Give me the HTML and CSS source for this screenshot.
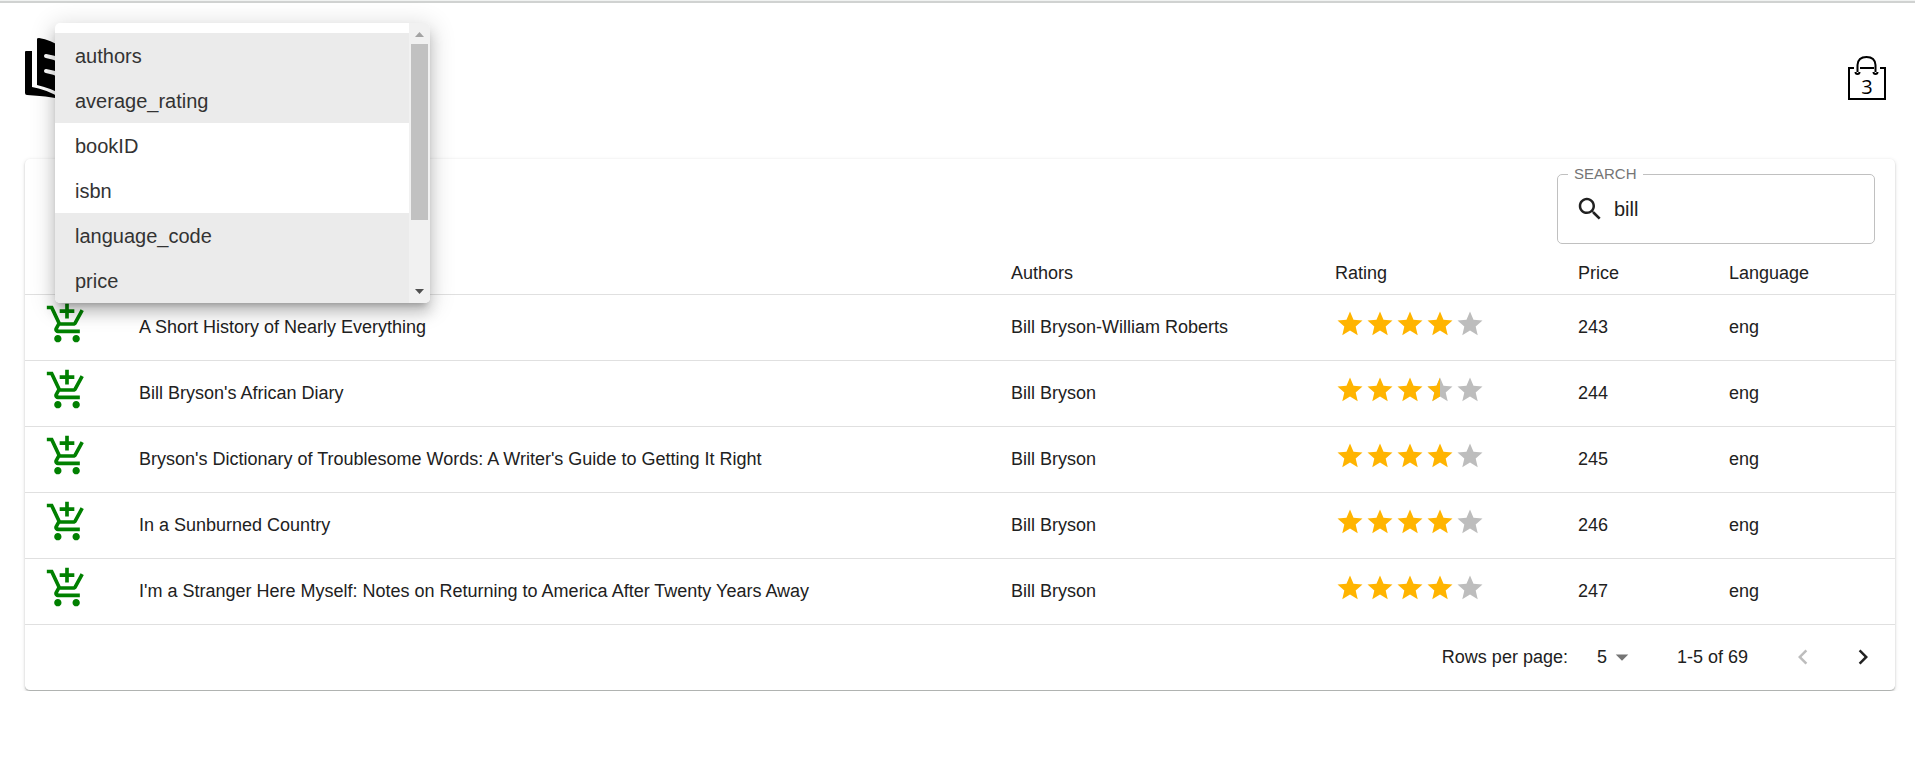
FILE: index.html
```html
<!DOCTYPE html>
<html lang="en">
<head>
<meta charset="utf-8">
<title>Book store</title>
<link rel="stylesheet" href="styles.css">
</head>
<body>
<svg class="sprite" aria-hidden="true">
  <symbol id="cart" viewBox="0 0 24 24"><path d="M11 9h2V6h3V4h-3V1h-2v3H8v2h3v3zm-4 9c-1.100 0-1.990.9-1.990 2S5.900 22 7 22s2-.9 2-2-.9-2-2-2zm10 0c-1.100 0-1.990.9-1.990 2s.890 2 1.990 2 2-.9 2-2-.9-2-2-2zm-9.830-3.250l.03-.12.9-1.630h7.450c.750 0 1.410-.410 1.750-1.030l3.860-7.010L19.420 4h-.01l-1.100 2-2.760 5H8.530l-.13-.27L6.160 6l-.95-2-.94-2H1v2h2l3.600 7.590-1.350 2.450c-.160.280-.250.610-.250.960 0 1.100.9 2 2 2h12v-2H7.420c-.130 0-.250-.110-.250-.250z"/></symbol>
  <symbol id="star" viewBox="0 0 24 24"><path d="M12 17.270L18.180 21l-1.640-7.030L22 9.240l-7.190-.61L12 2 9.190 8.630 2 9.240l5.460 4.730L5.820 21z"/></symbol>
  <symbol id="half" viewBox="0 0 24 24"><path d="M12 2L9.190 8.630 2 9.240l5.460 4.730L5.820 21 12 17.270z"/></symbol>
</svg>

<header class="topbar">
  <a class="logo" href="#" aria-label="Home">
    <svg viewBox="0 0 60 62"><path d="M0 14q0-1 1-1h6v36q13 2 29 11v1Q22 58 2 57q-2 0-2-2z"/><path d="M12 1q0-1 2-1 12 2 22 9v47Q25 50 12 47z"/><path class="logo-cut" d="M21 18q8 1 15 5M21 33q8 1 15 5"/></svg>
  </a>
  <button class="bag" type="button" aria-label="Shopping bag, 3 items">
    <svg viewBox="0 0 38 45"><path d="M6 12H1v31h36V12h-5M12 12h14M9.500 16V9Q10 1 18.500 1T27.500 9v7"/><path d="M7.500 16a2 2 0 0 0 4 0M25.500 16a2 2 0 0 0 4 0"/></svg>
    <span class="bag-count">3</span>
  </button>
</header>

<main class="card">
  <div class="toolbar">
    <fieldset class="search">
      <legend><label for="search">SEARCH</label></legend>
      <svg class="search-icon" viewBox="0 0 24 24"><path d="M15.500 14h-.79l-.28-.27C15.410 12.590 16 11.110 16 9.500 16 5.910 13.090 3 9.500 3S3 5.910 3 9.500 5.910 16 9.500 16c1.610 0 3.090-.59 4.230-1.570l.27.28v.79l5 4.990L20.490 19l-4.990-5zm-6 0C7.010 14 5 11.990 5 9.500S7.010 5 9.500 5 14 7.010 14 9.500 11.990 14 9.500 14z"/></svg>
      <input id="search" type="text" value="bill">
    </fieldset>
  </div>

  <table class="books">
    <colgroup><col class="c-add"><col class="c-title"><col class="c-authors"><col class="c-rating"><col class="c-price"><col class="c-lang"></colgroup>
    <thead>
      <tr><th></th><th></th><th>Authors</th><th>Rating</th><th>Price</th><th>Language</th></tr>
    </thead>
    <tbody>
      <tr>
        <td><button class="add" type="button" aria-label="Add to cart"><svg><use href="#cart"/></svg></button></td>
        <td>A Short History of Nearly Everything</td><td>Bill Bryson-William Roberts</td>
        <td><div class="stars"><svg><use href="#star"/></svg><svg><use href="#star"/></svg><svg><use href="#star"/></svg><svg><use href="#star"/></svg><svg class="off"><use href="#star"/></svg></div></td>
        <td>243</td><td>eng</td>
      </tr>
      <tr>
        <td><button class="add" type="button" aria-label="Add to cart"><svg><use href="#cart"/></svg></button></td>
        <td>Bill Bryson's African Diary</td><td>Bill Bryson</td>
        <td><div class="stars"><svg><use href="#star"/></svg><svg><use href="#star"/></svg><svg><use href="#star"/></svg><svg><use class="off" href="#star"/><use href="#half"/></svg><svg class="off"><use href="#star"/></svg></div></td>
        <td>244</td><td>eng</td>
      </tr>
      <tr>
        <td><button class="add" type="button" aria-label="Add to cart"><svg><use href="#cart"/></svg></button></td>
        <td>Bryson's Dictionary of Troublesome Words: A Writer's Guide to Getting It Right</td><td>Bill Bryson</td>
        <td><div class="stars"><svg><use href="#star"/></svg><svg><use href="#star"/></svg><svg><use href="#star"/></svg><svg><use href="#star"/></svg><svg class="off"><use href="#star"/></svg></div></td>
        <td>245</td><td>eng</td>
      </tr>
      <tr>
        <td><button class="add" type="button" aria-label="Add to cart"><svg><use href="#cart"/></svg></button></td>
        <td>In a Sunburned Country</td><td>Bill Bryson</td>
        <td><div class="stars"><svg><use href="#star"/></svg><svg><use href="#star"/></svg><svg><use href="#star"/></svg><svg><use href="#star"/></svg><svg class="off"><use href="#star"/></svg></div></td>
        <td>246</td><td>eng</td>
      </tr>
      <tr>
        <td><button class="add" type="button" aria-label="Add to cart"><svg><use href="#cart"/></svg></button></td>
        <td>I'm a Stranger Here Myself: Notes on Returning to America After Twenty Years Away</td><td>Bill Bryson</td>
        <td><div class="stars"><svg><use href="#star"/></svg><svg><use href="#star"/></svg><svg><use href="#star"/></svg><svg><use href="#star"/></svg><svg class="off"><use href="#star"/></svg></div></td>
        <td>247</td><td>eng</td>
      </tr>
    </tbody>
  </table>

  <footer class="pager">
    <label for="rows">Rows per page:</label>
    <span class="rows">
      <select id="rows"><option>5</option><option>10</option><option>25</option></select>
      <svg viewBox="0 0 24 24"><path d="M7 10l5 5 5-5z"/></svg>
    </span>
    <span class="range">1-5 of 69</span>
    <button class="page" type="button" aria-label="Previous page" disabled><svg viewBox="0 0 24 24"><path d="M15.410 16.590L10.830 12l4.580-4.590L14 6l-6 6 6 6z"/></svg></button>
    <button class="page" type="button" aria-label="Next page"><svg viewBox="0 0 24 24"><path d="M8.590 16.590L13.170 12 8.590 7.410 10 6l6 6-6 6z"/></svg></button>
  </footer>
</main>

<div class="menu">
  <div class="menu-list" role="listbox" aria-label="Columns" aria-multiselectable="true">
    <button type="button" role="option" aria-selected="true">authors</button>
    <button type="button" role="option" aria-selected="true">average_rating</button>
    <button type="button" role="option" aria-selected="false">bookID</button>
    <button type="button" role="option" aria-selected="false">isbn</button>
    <button type="button" role="option" aria-selected="true">language_code</button>
    <button type="button" role="option" aria-selected="true">price</button>
  </div>
  <div class="scrollbar" aria-hidden="true">
    <svg class="arrow up" viewBox="0 0 9 5"><path d="M0 5L4.500 0 9 5z"/></svg>
    <div class="track"><div class="thumb"></div></div>
    <svg class="arrow" viewBox="0 0 9 5"><path d="M0 0L4.500 5 9 0z"/></svg>
  </div>
</div>
</body>
</html>
```
FILE: styles.css
```css
* { box-sizing: border-box; }

body {
  margin: 0;
  border-top: 1px solid #f0f2f1;
  background: #fff;
  color: #212121;
  font-family: "Liberation Sans", Arial, sans-serif;
  font-size: 18px;
  line-height: 24px;
}

button, input, select { font: inherit; color: inherit; }
button { padding: 0; border: 0; background: none; cursor: pointer; }
svg { display: block; }
.sprite { position: absolute; width: 0; height: 0; }

.topbar {
  display: flex;
  justify-content: space-between;
  align-items: flex-start;
  height: 158px;
  padding: 35px 29px 0 25px;
  border-top: 2px solid #d0d2d1;
}
.logo svg { width: 60px; height: 62px; fill: #000; }
.logo-cut { fill: none; stroke: #fff; stroke-width: 4; stroke-linecap: round; }
.bag { display: grid; margin-top: 18px; color: #000; }
.bag > * { grid-area: 1 / 1; }
.bag svg { width: 38px; height: 45px; fill: none; stroke: #000; stroke-width: 2; }
.bag-count { padding-top: 19px; font-family: "Open Sans", sans-serif; font-size: 20px; }

.card {
  margin: 0 20px 0 25px;
  border-bottom: 1px solid #b0b3b1;
  border-radius: 5px;
  background: #fff;
  box-shadow: 0 1px 2px 0 rgba(0,0,0,.16), 0 1px 4px 0 rgba(0,0,0,.12);
}

.toolbar { display: flex; justify-content: flex-end; height: 92px; padding: 6px 20px 0; }
.search {
  display: flex;
  align-items: center;
  width: 318px;
  height: 79px;
  margin: 0;
  padding: 0 17px 9px;
  border: 1px solid #c0c0c0;
  border-radius: 5px;
}
.search legend { margin-left: -7px; padding: 0 6px; color: #757575; font-size: 15px; line-height: 18px; }
.search-icon { width: 30px; height: 30px; flex: none; fill: #212121; }
.search input { width: 100%; min-width: 0; margin-left: 9px; padding: 0; border: 0; outline: 0; background: none; font-size: 20px; }

.books { width: 100%; table-layout: fixed; border-collapse: collapse; }
.c-add { width: 94px; }
.c-authors { width: 324px; }
.c-rating { width: 243px; }
.c-price { width: 151px; }
.c-lang { width: 186px; }
.books th, .books td { padding: 0 20px; border-bottom: 1px solid #e0e0e0; text-align: left; font-weight: 400; }
.books th { height: 43px; padding-top: 2px; }
.books td { height: 66px; }
.books td:first-child { padding-right: 0; }
.add { display: block; margin-bottom: 6px; }
.add svg { width: 44px; height: 44px; fill: green; }
.stars { display: flex; margin-bottom: 6px; }
.stars svg { width: 30px; height: 30px; fill: #ffb400; }
.stars .off { fill: #bdbdbd; }

.pager { display: flex; align-items: center; justify-content: flex-end; height: 65px; padding-right: 2px; }
.rows { display: flex; align-items: center; margin-left: 29px; }
.rows select { appearance: none; width: 10px; padding: 0; border: 0; background: none; }
.rows svg { width: 30px; height: 30px; fill: #757575; }
.range { margin: 0 25px 0 40px; }
.page { display: grid; place-items: center; width: 60px; height: 60px; }
.page svg { width: 30px; height: 30px; fill: #212121; }
.page:disabled svg { fill: #bdbdbd; }

.menu {
  position: absolute;
  top: 23px;
  left: 55px;
  display: flex;
  width: 375px;
  border-radius: 5px;
  overflow: hidden;
  background: #fff;
  box-shadow: 0 6px 6px -4px rgba(0,0,0,.24), 0 10px 13px 1px rgba(0,0,0,.14), 0 4px 24px 3px rgba(0,0,0,.14);
}
.menu-list { flex: 1; padding-top: 10px; }
.menu-list button { display: block; width: 100%; height: 45px; padding: 0 20px; color: #333; text-align: left; font-size: 20px; }
.menu-list [aria-selected="true"] { background: #ebebeb; }
.scrollbar { display: flex; flex-direction: column; align-items: center; width: 21px; padding: 9px 2px; background: #f1f1f1; }
.arrow { width: 9px; height: 5px; fill: #505050; }
.arrow.up { fill: #a3a3a3; }
.track { flex: 1; width: 100%; padding: 7px 0; }
.thumb { height: 74%; background: #c1c1c1; }
```
